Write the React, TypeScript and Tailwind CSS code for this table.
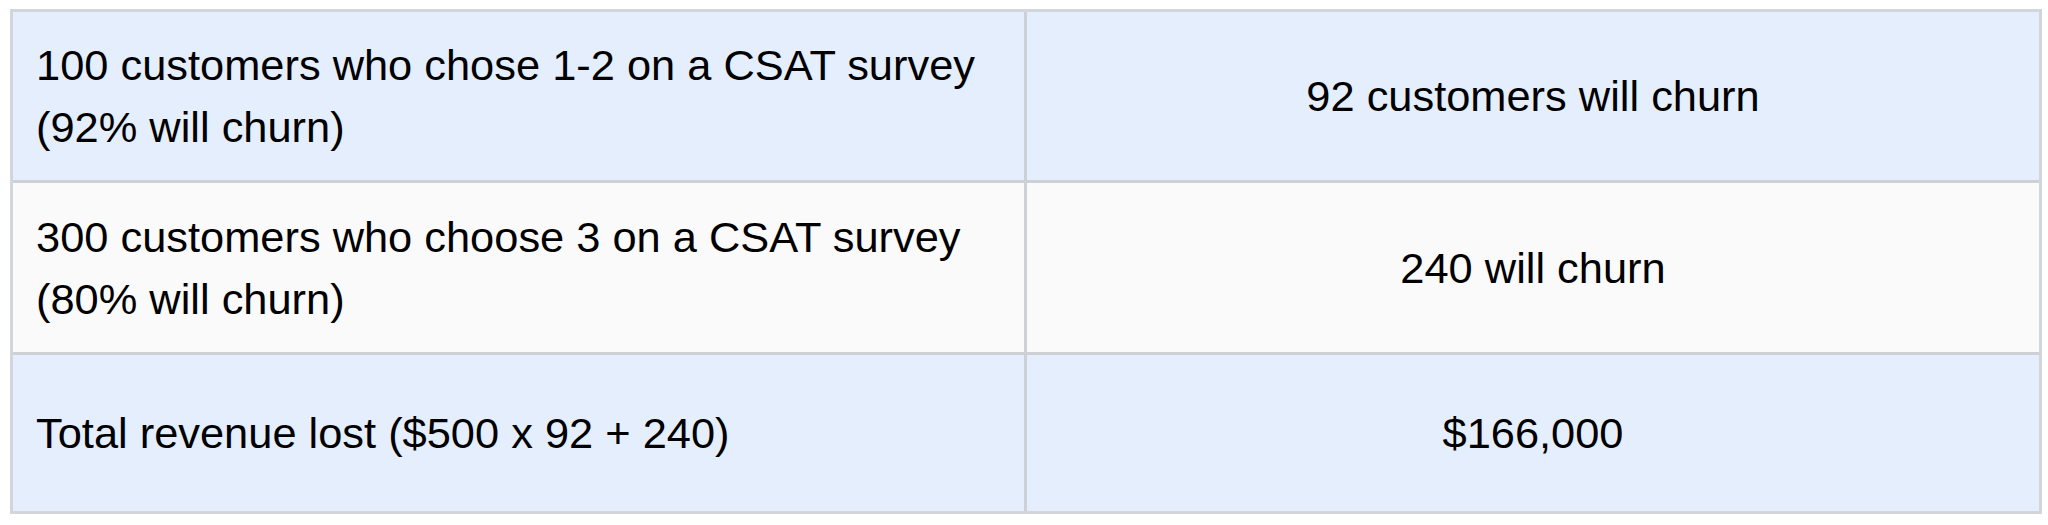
const rows = [
  {
    left: ["100 customers who chose 1-2 on a CSAT survey", "(92% will churn)"],
    right: "92 customers will churn",
    height: "h-[168px]",
    bg: "bg-[#e4eefd]",
  },
  {
    left: ["300 customers who choose 3 on a CSAT survey", "(80% will churn)"],
    right: "240 will churn",
    height: "h-[172px]",
    bg: "bg-[#fafafa]",
  },
  {
    left: ["Total revenue lost ($500 x 92 + 240)"],
    right: "$166,000",
    height: "h-[159px]",
    bg: "bg-[#e4eefd]",
  },
];

export default function App() {
  return (
    <div className="w-[2048px] h-[525px] bg-white pt-[9px] pl-[10px]">
      <div className="w-[2032px] border-[3px] border-[#d2d5da] font-['Liberation_Sans',Arial,sans-serif] text-[43.4px] leading-[62px] text-black">
        {rows.map((row, i) => (
          <div
            key={i}
            className={`flex ${row.height} ${row.bg} ${i > 0 ? "border-t-[3px] border-[#cdd0d4]" : ""}`}
          >
            {/* left column */}
            <div className="w-[1014px] shrink-0 border-r-[3px] border-[#cdd0d4] flex items-center pl-[23px]">
              <div>
                {row.left.map((line, j) => (
                  <div key={j}>{line}</div>
                ))}
              </div>
            </div>
            {/* right column */}
            <div className="flex-1 flex items-center justify-center">{row.right}</div>
          </div>
        ))}
      </div>
    </div>
  );
}
